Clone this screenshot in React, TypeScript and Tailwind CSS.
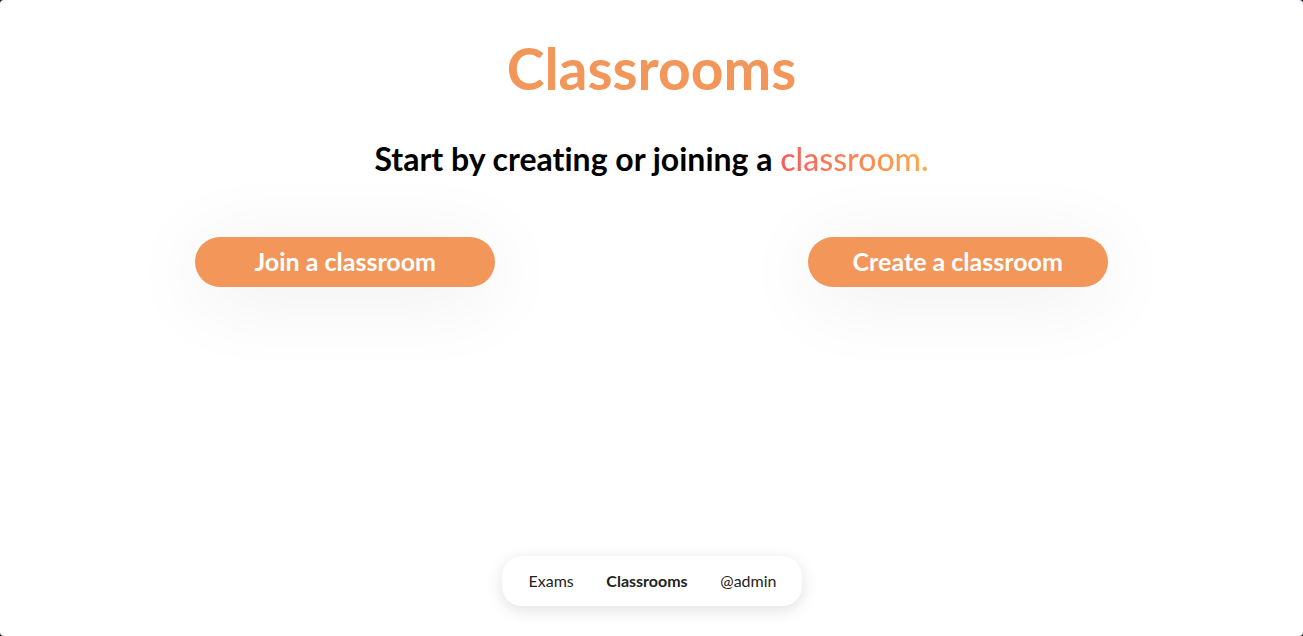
import React from "react";

export default function App() {
  return (
    <div className="h-[636px] w-full bg-[#1c1c24]">
      <div
        className="relative flex h-[636px] w-full flex-col items-center overflow-hidden rounded-[4px] bg-white [font-variant-ligatures:none]"
        style={{ fontFamily: "Lato, 'Noto Sans', sans-serif" }}
      >
        <h1 className="mt-[29px] text-[57px] font-bold leading-[78px] text-[#f2965a]">
          Classrooms
        </h1>
        <p className="mt-[31px] text-[32px] font-bold leading-[42px] text-black">
          Start by creating or joining a{" "}
          <span className="bg-gradient-to-r from-[#f65c5e] to-[#fbab48] bg-clip-text font-medium text-transparent">
            classroom.
          </span>
        </p>
        <div className="mt-[57px] grid w-full grid-cols-2 px-[39px]">
          <div className="flex justify-center">
            <button className="h-[50px] w-[300px] rounded-full bg-[#f2965a] text-[25px] font-bold text-white shadow-[0_10px_80px_rgba(0,0,0,0.08)]">
              Join a classroom
            </button>
          </div>
          <div className="flex justify-center">
            <button className="h-[50px] w-[300px] rounded-full bg-[#f2965a] text-[25px] font-bold text-white shadow-[0_10px_80px_rgba(0,0,0,0.08)]">
              Create a classroom
            </button>
          </div>
        </div>
        <div className="flex-1" />
        <nav className="mb-[30px] flex h-[50px] w-[300px] items-center justify-between rounded-[20px] bg-white pl-[27px] pr-[25px] text-[16px] text-[#222] shadow-[0_4px_16px_rgba(0,0,0,0.12)]">
          <span>Exams</span>
          <span className="font-bold">Classrooms</span>
          <span>@admin</span>
        </nav>
      </div>
    </div>
  );
}
